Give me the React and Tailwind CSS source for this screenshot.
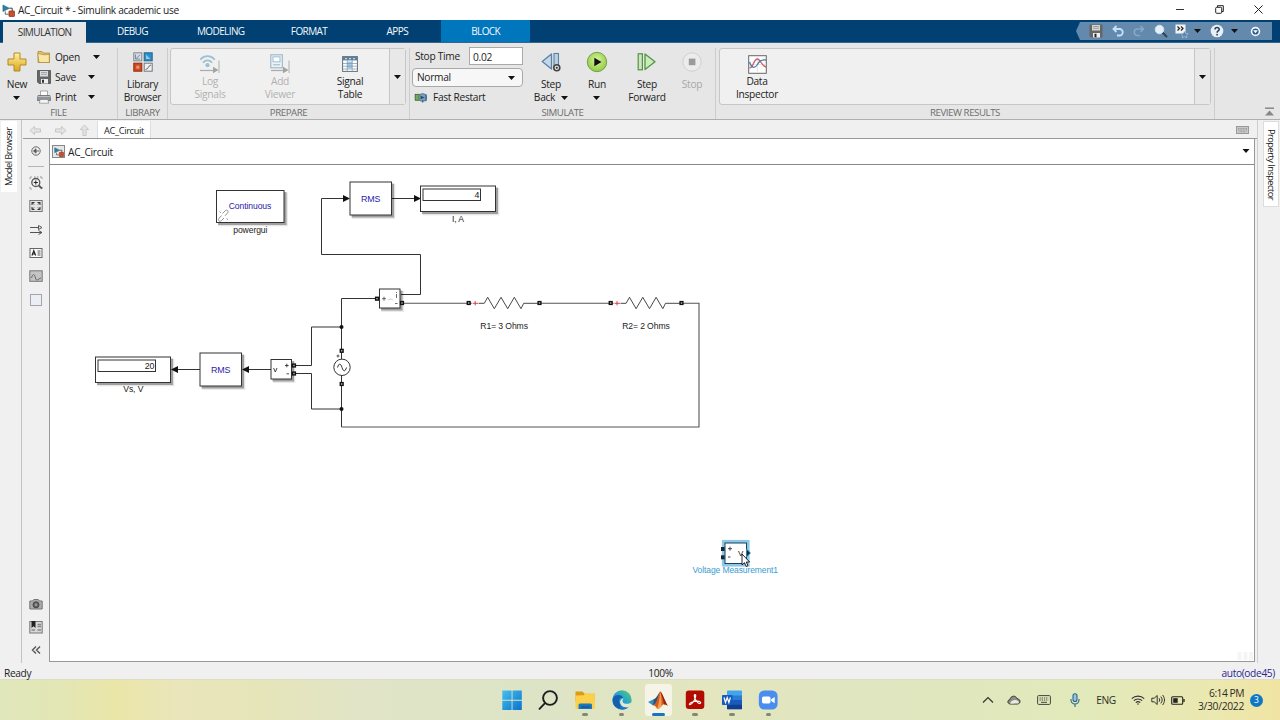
import React from 'react'
import clsx from 'clsx'

const TABS = ['SIMULATION', 'DEBUG', 'MODELING', 'FORMAT', 'APPS', 'BLOCK']

const Caret = ({ className }) => (
  <svg viewBox="0 0 7 4" className={clsx('h-[4px] w-[7px] shrink-0', className)}>
    <path d="M0 0h7L3.5 4z" fill="#111" />
  </svg>
)

/* ---------- Icons ---------- */

const ModelIcon = ({ className }) => (
  <svg viewBox="0 0 14 14" className={className}>
    <path d="M1 1l7 3.6L1 8z" fill="#2f7f9f" stroke="#1f5f7c" strokeWidth=".6" />
    <path d="M8 4.5h3V8" fill="none" stroke="#333" strokeWidth="1" />
    <path d="M3.5 8v3H7" fill="none" stroke="#333" strokeWidth=".8" />
    <rect x="7.5" y="7.5" width="6" height="6" rx=".8" fill="#c8512d" stroke="#8d2f15" strokeWidth=".8" />
  </svg>
)

const PlusIcon = () => (
  <svg viewBox="0 0 20 20" className="h-5 w-5">
    <defs>
      <linearGradient id="gold" x1="0" y1="0" x2="0" y2="1">
        <stop offset="0" stopColor="#fff3a0" />
        <stop offset="1" stopColor="#dca41c" />
      </linearGradient>
    </defs>
    <path d="M7 1h6v6h6v6h-6v6H7v-6H1V7h6z" fill="url(#gold)" stroke="#b58a25" strokeWidth="1" strokeLinejoin="round" />
  </svg>
)

const FolderIcon = () => (
  <svg viewBox="0 0 14 14" className="h-[14px] w-[14px]">
    <path d="M1 1.500h4L6 3h6.500v9.500H1z" fill="#e3c56a" stroke="#a98a38" strokeWidth=".8" />
    <path d="M.7 3.500l6.800 1.300 4.800-.5v8.200H2z" fill="#f8e6a6" stroke="#a98a38" strokeWidth=".7" />
  </svg>
)

const SaveIcon = () => (
  <svg viewBox="0 0 14 14" className="h-[14px] w-[14px]">
    <path d="M.5.5h13v13H2L.5 12z" fill="#666" stroke="#444" strokeWidth=".7" />
    <path d="M3 1h8v5.5H3z" fill="#d9dde0" />
    <path d="M4 2.5h6M4 4.3h6" stroke="#8a9095" strokeWidth=".7" />
    <path d="M4 9h7v4.5H4z" fill="#eee" />
    <path d="M5 9.8h2v3H5z" fill="#333" />
  </svg>
)

const PrintIcon = () => (
  <svg viewBox="0 0 14 14" className="h-[14px] w-[14px]">
    <path d="M3.5 1h7v5h-7z" fill="#fdfdfd" stroke="#888" strokeWidth=".7" />
    <path d="M1 5.5h12l.7 5H.3z" fill="#8f969b" stroke="#5f666b" strokeWidth=".7" />
    <path d="M1 6.5h12" stroke="#c5cacd" strokeWidth=".8" />
    <path d="M3 9.5h8l.6 3.7H2.4z" fill="#f5f5f5" stroke="#777" strokeWidth=".6" />
  </svg>
)

const LibraryIcon = () => (
  <svg viewBox="0 0 20 20" className="h-5 w-5">
    <rect x=".8" y=".8" width="8" height="8" fill="#d7dce0" stroke="#808890" />
    <path d="M2.500 2.500v4.500h4.500M3 6.500L7 3" fill="none" stroke="#6b8497" strokeWidth=".9" />
    <rect x="11.2" y=".8" width="8" height="8" fill="#2f8cc4" stroke="#1f6790" />
    <path d="M13 7h4.500L13 2.500z" fill="#8fc9e8" />
    <rect x=".8" y="11.2" width="8" height="8" fill="#cf4a20" stroke="#8f2c0d" />
    <rect x="3.3" y="13.7" width="3" height="3" fill="#e79476" />
    <rect x="11.2" y="11.2" width="8" height="8" fill="#f0f0f0" stroke="#707880" />
    <path d="M12.5 17.5c3 0 3-4.500 5.500-4.500" fill="none" stroke="#555" strokeWidth=".9" />
  </svg>
)

const LogSignalsIcon = () => (
  <svg viewBox="0 0 20 20" className="h-5 w-5">
    <g fill="none" stroke="#9fc0d4" strokeWidth="1.800" strokeLinecap="round">
      <path d="M.8 5.200a9 9 0 0 1 13.400 0" />
      <path d="M3.400 8.200a5.600 5.600 0 0 1 8.200 0" />
    </g>
    <circle cx="7.500" cy="11.200" r="2.100" fill="#9fc0d4" />
    <path d="M0 16.500h15" stroke="#aaa" strokeWidth="1.200" />
    <path d="M13 12.800l5.500 3.200-5.500 3.200z" fill="#a3a3a3" />
    <path d="M19 6.500v12.500" stroke="#b0b0b0" />
  </svg>
)

const AddViewerIcon = () => (
  <svg viewBox="0 0 20 20" className="h-5 w-5">
    <rect x=".8" y=".8" width="11.500" height="13" fill="#eef2f5" stroke="#9db5c6" strokeWidth="1.100" />
    <rect x="3" y="2.800" width="7" height="5" fill="#fff" stroke="#9fc3dc" strokeWidth="1.100" />
    <path d="M3 10.800h7" stroke="#9db5c6" />
    <path d="M1 16.500h13" stroke="#aaa" strokeWidth="1.200" />
    <path d="M13 12.800l5.500 3.200-5.500 3.200z" fill="#a3a3a3" />
    <path d="M19 6.500v12.500" stroke="#b0b0b0" />
  </svg>
)

const SignalTableIcon = () => (
  <svg viewBox="0 0 16 16" className="h-4 w-4">
    <rect x=".6" y=".6" width="14.800" height="14.800" fill="#fff" stroke="#5f6f7c" />
    <path d="M1 1h14v3.400H1z" fill="#5f7f98" />
    <path d="M5.200 5.500h5v7h-5z" fill="#9cc9ea" />
    <path d="M1 7.500h14M1 10.200h14M1 13h14M5.200 4v11.500M10.200 4v11.500" stroke="#7d93a5" strokeWidth=".7" />
    <path d="M3 2.700h2M7 2.700h2M11 2.700h2" stroke="#dce8f0" />
  </svg>
)

const FastRestartIcon = () => (
  <svg viewBox="0 0 14 12" className="h-[11px] w-[14px]">
    <rect x=".6" y="2.500" width="4.500" height="6.500" fill="#6fae4a" stroke="#34552a" strokeWidth=".8" />
    <circle cx="8.800" cy="6" r="4.300" fill="#7e9fb9" stroke="#4b6b85" strokeWidth=".8" />
    <path d="M6.500 4l4.500 2-4.500 2z" fill="#1f4f78" />
    <path d="M12.500 2.500v7.500M8.800 9v2.500" stroke="#34618a" strokeWidth="1.200" />
  </svg>
)

const StepBackIcon = () => (
  <svg viewBox="0 0 20 20" className="h-5 w-5">
    <path d="M10.500 2v15L1.200 9.500z" fill="#c2d8e9" stroke="#5b81a5" strokeWidth="1.300" strokeLinejoin="round" />
    <rect x="13" y="1.500" width="4.500" height="14" fill="#b9d0e3" stroke="#5b81a5" strokeWidth="1.100" />
    <circle cx="15.800" cy="15.800" r="3" fill="#ddd" stroke="#444" strokeWidth="1.600" />
    <circle cx="15.800" cy="15.800" r="1" fill="#333" />
  </svg>
)

const RunIcon = () => (
  <svg viewBox="0 0 22 22" className="h-[22px] w-[22px]">
    <defs>
      <radialGradient id="run" cx=".5" cy=".4" r=".6">
        <stop offset="0" stopColor="#d9f59b" />
        <stop offset="1" stopColor="#8fca42" />
      </radialGradient>
    </defs>
    <circle cx="11" cy="11" r="9.700" fill="url(#run)" stroke="#6d9a44" strokeWidth=".9" />
    <path d="M8.300 6.700l7.200 4.300-7.200 4.300z" fill="#111" />
  </svg>
)

const StepForwardIcon = () => (
  <svg viewBox="0 0 20 20" className="h-5 w-5">
    <rect x="1.200" y="1.800" width="4.200" height="16" fill="#cbe6bb" stroke="#55934a" strokeWidth="1.200" />
    <path d="M8 2v15.500l10-7.800z" fill="#c9edb6" stroke="#55934a" strokeWidth="1.300" strokeLinejoin="round" />
  </svg>
)

const StopIcon = () => (
  <svg viewBox="0 0 20 20" className="h-5 w-5">
    <circle cx="10" cy="10" r="9.200" fill="#ececec" stroke="#cfcfcf" />
    <rect x="6.800" y="6.600" width="6.600" height="6.600" fill="#9b9b9b" />
  </svg>
)

const InspectorIcon = () => (
  <svg viewBox="0 0 19 19" className="h-[19px] w-[19px]">
    <rect x=".7" y=".7" width="17.600" height="17.600" fill="#fdfdfd" stroke="#666" />
    <path d="M1 9.500h17M9.500 1v17" stroke="#ddd" strokeWidth=".7" />
    <path d="M1.500 13c4 0 4-9 8-9 3 0 4 7 8.500 8" fill="none" stroke="#d05c66" strokeWidth="1.300" />
    <path d="M1.500 7c2 6 5 7 8 2.500 2-4 5-5 8.500-4.500" fill="none" stroke="#4a7ba6" strokeWidth="1.300" />
  </svg>
)

/* ---------- Ribbon ---------- */

const Section = ({ title, className, children }) => (
  <div className={clsx('flex shrink-0 flex-col pt-[1px] text-[#222]', className)}>
    <div className="flex h-[65px]">{children}</div>
    <div className="text-center text-[9.700px] leading-[12px] tracking-[-0.45px] text-[#6d6d6d]">{title}</div>
  </div>
)

const Divider = () => <div className="mt-[5px] h-[71px] w-px shrink-0 bg-[#cdcdcd]" />

const BigButton = ({ icon, lines, disabled, className }) => (
  <div className={clsx('flex shrink-0 flex-col items-center pt-[7px]', className)}>
    <div className="flex h-[22px] items-center">{icon}</div>
    <div className={clsx('mt-[5px] flex flex-col items-center leading-[13px] whitespace-nowrap', disabled && 'text-[#a8a8a8]')}>
      {lines.map((l, i) => <span key={i} className="flex h-[13px] items-center">{l}</span>)}
    </div>
  </div>
)

const GalleryItem = ({ icon, lines, disabled }) => (
  <div className="flex w-[70px] flex-col items-center pt-[4px]">
    <div className="flex h-[22px] items-center">{icon}</div>
    <div className={clsx('flex flex-col items-center leading-[13px] whitespace-nowrap', disabled && 'text-[#b0b0b0]')}>
      {lines.map(l => <span key={l}>{l}</span>)}
    </div>
  </div>
)

const Gallery = ({ className, children }) => (
  <div className={clsx('mt-[4px] flex h-[57px] rounded-[3px] border border-[#c6c6c6] bg-[#f0f0f0]', className)}>
    {children}
    <div className="ml-auto flex w-[16px] items-center justify-center border-l border-[#c6c6c6] bg-[#e8e8e8]">
      <Caret className="h-[4px] w-[6px]" />
    </div>
  </div>
)

const FileRow = ({ icon, label, gap }) => (
  <div className="flex h-5 items-center">
    {icon}
    <span className="mt-px ml-[4px]">{label}</span>
    <Caret className={gap} />
  </div>
)

const Ribbon = () => (
  <div className="flex h-[77px] border-b border-[#aeaeae] bg-[#e6e6e6] text-[10.200px] tracking-[-0.3px]">
    <Section title="FILE" className="w-[117px]">
      <BigButton className="w-[34px]" icon={<PlusIcon />} lines={['New', <Caret />]} />
      <div className="flex flex-col pt-[3px] pl-[3px]">
        <FileRow icon={<FolderIcon />} label="Open" gap="ml-[13px]" />
        <FileRow icon={<SaveIcon />} label="Save" gap="ml-[12px]" />
        <FileRow icon={<PrintIcon />} label="Print" gap="ml-[12px]" />
      </div>
    </Section>
    <Divider />
    <Section title="LIBRARY" className="w-[49px]">
      <BigButton className="w-full" icon={<LibraryIcon />} lines={['Library', 'Browser']} />
    </Section>
    <Divider />
    <Section title="PREPARE" className="w-[241px]">
      <Gallery className="ml-[2px] w-[236px] pl-[4px]">
        <GalleryItem icon={<LogSignalsIcon />} lines={['Log', 'Signals']} disabled />
        <GalleryItem icon={<AddViewerIcon />} lines={['Add', 'Viewer']} disabled />
        <GalleryItem icon={<SignalTableIcon />} lines={['Signal', 'Table']} />
      </Gallery>
    </Section>
    <Divider />
    <Section title="SIMULATE" className="w-[305px]">
      <div className="flex w-[113px] flex-col pt-[3px] pl-[2px]">
        <div className="flex h-[18px] items-center">
          <span className="mt-px w-[57px] pl-[3px] whitespace-nowrap">Stop Time</span>
          <div className="h-[18px] w-[54px] border border-[#a9a9a9] bg-white pl-[3px] leading-[18px]">0.02</div>
        </div>
        <div className="mt-[2.500px] flex h-[19px] w-[111px] items-center rounded-[4px] border border-[#a9a9a9] bg-[#f7f7f7] pt-px pr-[7px] pl-[4px]">
          Normal
          <Caret className="ml-auto" />
        </div>
        <div className="mt-[2px] flex h-[18px] items-center gap-[5px] pl-[2px] whitespace-nowrap">
          <FastRestartIcon />
          Fast Restart
        </div>
      </div>
      <BigButton
        className="w-[56px]"
        icon={<StepBackIcon />}
        lines={['Step', <span className="flex items-center gap-[6px]">Back <Caret className="h-[4px] w-[6px]" /></span>]}
      />
      <BigButton className="w-[36px]" icon={<RunIcon />} lines={['Run', <Caret className="h-[4px] w-[6px]" />]} />
      <BigButton className="w-[64px]" icon={<StepForwardIcon />} lines={['Step', 'Forward']} />
      <BigButton className="w-[26px]" icon={<StopIcon />} lines={['Stop']} disabled />
    </Section>
    <Divider />
    <Section title="REVIEW RESULTS" className="w-[498px]">
      <Gallery className="ml-[3px] w-[492px] pl-[2px]">
        <GalleryItem icon={<InspectorIcon />} lines={['Data', 'Inspector']} />
      </Gallery>
    </Section>
    <Divider />
    <div className="flex flex-1 items-end justify-end pr-[6px] pb-[3px]">
      <svg viewBox="0 0 9 9" className="h-[9px] w-[9px]">
        <path d="M0 1.200h9" stroke="#888" strokeWidth="1.500" />
        <path d="M4.500 3.500L9 8.500H0z" fill="#888" />
      </svg>
    </div>
  </div>
)

const QuickAccess = () => (
  <div className="mr-[8px] ml-auto flex h-[18px] w-[196px] items-center bg-[#6389ac] pl-[13px] [clip-path:polygon(4px_0,100%_0,100%_100%,4px_100%,0_50%)]">
    <svg viewBox="0 0 14 14" className="h-[14px] w-[14px]">
      <path d="M.5.5h13v13H2L.5 12z" fill="#666" />
      <path d="M3 1h8v5.500H3z" fill="#d5d5d0" />
      <path d="M4 2.500h6M4 4.300h6" stroke="#888" strokeWidth=".7" />
      <path d="M4 9h7v4.500H4z" fill="#eee" />
      <path d="M5.500 9.800h2v3.500h-2z" fill="#222" />
    </svg>
    <svg viewBox="0 0 12 12" className="ml-[9px] h-[12px] w-[12px]" fill="none" stroke="#c3e2f8" strokeWidth="1.800">
      <path d="M4.500 1L1.500 4l3 3M2 4h5.500a3.200 3.200 0 0 1 0 6.500H5" />
    </svg>
    <svg viewBox="0 0 12 12" className="ml-[9px] h-[12px] w-[12px]" fill="none" stroke="#86a9c6" strokeWidth="1.600">
      <path d="M7.500 1l3 3-3 3M10 4H4.500a3.200 3.200 0 0 0 0 6.500H7" />
    </svg>
    <svg viewBox="0 0 14 14" className="ml-[9px] h-[14px] w-[14px]">
      <path d="M8.500 8.500l4 4" stroke="#34424f" strokeWidth="2" strokeLinecap="round" />
      <circle cx="5.500" cy="5.500" r="4.300" fill="#e4f0f8" stroke="#cadcea" />
    </svg>
    <svg viewBox="0 0 14 14" className="ml-[7px] h-[14px] w-[14px]">
      <rect x=".5" y=".5" width="10" height="9" fill="#f3f3f3" />
      <path d="M2.500 2.500l2 2-2 2M6 2.500l2 2-2 2" fill="none" stroke="#222" strokeWidth="1.200" />
      <path d="M9.500 7l1.200 2.300 2.600.3-1.900 1.800.5 2.500-2.400-1.300L7.200 14l.5-2.500-1.900-1.900 2.600-.3z" fill="#5c87ab" stroke="#b7cfe0" strokeWidth=".6" />
    </svg>
    <Caret className="ml-[5px] w-[6px]" />
    <svg viewBox="0 0 14 14" className="ml-[9px] h-[14px] w-[14px]">
      <circle cx="7" cy="7" r="6.300" fill="#e9eff4" />
      <path d="M5 5.400c0-2.600 4.200-2.500 4.200-.1C9.200 7 7.100 6.900 7.100 8.700" fill="none" stroke="#25405c" strokeWidth="1.500" />
      <circle cx="7.100" cy="10.700" r=".9" fill="#25405c" />
    </svg>
    <Caret className="ml-[7px] w-[6px]" />
    <svg viewBox="0 0 12 12" className="ml-[12px] h-[11px] w-[11px]">
      <circle cx="6" cy="6" r="4.300" fill="#2b5f8b" stroke="#f1f6fa" strokeWidth="1.800" />
      <path d="M3.500 4.500h5L6 7.800z" fill="#fff" />
    </svg>
  </div>
)

/* ---------- Side palette ---------- */

const PaletteCell = ({ children }) => (
  <div className="flex h-[23.300px] items-center justify-center">
    <svg viewBox="0 0 14 14" className="h-[14px] w-[14px]" fill="none" stroke="#555" strokeWidth="1">{children}</svg>
  </div>
)

const Palette = () => (
  <div className="flex w-[27px] flex-col pb-[1px]">
    <div className="flex h-[24px] items-center justify-center">
      <svg viewBox="0 0 10 10" className="h-[10px] w-[10px]" fill="none" stroke="#666">
        <circle cx="5" cy="5" r="4.200" />
        <path d="M8 5H3.500M5 2.800L2.500 5 5 7.200z" fill="#333" />
      </svg>
    </div>
    <div className="mx-auto mt-[3px] mb-[4.500px] h-px w-4 bg-[#b5b5b5]" />
    <PaletteCell>
      <path d="M1 3V1h2M11 1h2v2M13 11v2M1 11v2h2M5 1h1.500M8 1h1.500" strokeDasharray="1.500 .8" stroke="#888" />
      <circle cx="6.800" cy="6.500" r="4" strokeWidth="1.300" />
      <path d="M9.800 9.500l3.200 3.200" strokeWidth="1.800" />
      <path d="M4.800 6.500h4M6.800 4.500v4" stroke="#222" />
    </PaletteCell>
    <PaletteCell>
      <rect x=".8" y="1.500" width="12.400" height="11" fill="#e4e4e4" stroke="#777" />
      <path d="M3 6V3.500h2.500M8.500 3.500H11V6M11 8v2.500H8.500M5.500 10.500H3V8M3 3.500l2 2M11 3.500l-2 2M11 10.500l-2-2M3 10.500l2-2" stroke="#333" />
    </PaletteCell>
    <PaletteCell>
      <path d="M1 4.500h9M1 9.500h12" strokeWidth="1.200" />
      <path d="M9.500 2.500l3.500 2-3.500 2zM9.500 7.500l3.500 2-3.500 2" />
    </PaletteCell>
    <PaletteCell>
      <rect x="1" y="2.500" width="12" height="9" fill="#fafafa" stroke="#666" />
      <path d="M3 9.500L4.800 4.800 6.600 9.500M3.600 8h2.400" stroke="#222" strokeWidth="1.200" />
      <path d="M8.500 5h3M8.500 7h3M8.500 9h3" />
    </PaletteCell>
    <PaletteCell>
      <rect x=".8" y="1.800" width="12.400" height="10.500" fill="#c4c4c4" stroke="#777" />
      <path d="M2.500 9c1.500-5 3-4 4 0s2.500 1 5.500 0" stroke="#666" />
    </PaletteCell>
    <PaletteCell>
      <rect x="1.500" y="1.500" width="11" height="11" fill="#eceef6" stroke="#a2a4ae" />
    </PaletteCell>
    <div className="mt-auto">
      <PaletteCell>
        <path d="M.8 4h3l1-1.500h4.500L10.500 4h2.700v8H.8z" fill="#aaa" stroke="#777" />
        <circle cx="7" cy="7.800" r="3" fill="#666" stroke="#444" />
        <circle cx="7" cy="7.800" r="1.200" fill="#999" stroke="none" />
      </PaletteCell>
      <PaletteCell>
        <rect x=".8" y="1.500" width="12.400" height="11.500" fill="#d8d8d8" stroke="#777" />
        <path d="M2.500 1h4v7l-2-1.800-2 1.800z" fill="#222" stroke="none" />
        <path d="M8.500 4.500h3.500M8.500 6.500h3.500M2.500 10h3.500M8.500 10h3.500" stroke="#888" strokeWidth="1.500" />
      </PaletteCell>
      <PaletteCell>
        <path d="M7 3.500L3.500 7 7 10.500M11 3.500L7.500 7l3.500 3.500" strokeWidth="1.400" />
      </PaletteCell>
    </div>
  </div>
)

/* ---------- Diagram ---------- */

const INK = '#333'
const BLUE = '#2a22a8'

const Block = ({ x, y, w, h }) => (
  <>
    <rect x={x + 1.5} y={y + 1.5} width={w + 1} height={h + 1} fill="#000" opacity=".3" />
    <rect x={x + 2} y={y + 2} width={w + 1.8} height={h + 1.8} fill="#000" opacity=".1" />
    <rect x={x} y={y} width={w} height={h} fill="#fff" stroke={INK} />
  </>
)

const Port = ({ x, y }) => <rect x={x - 1.4} y={y - 1.4} width="2.800" height="2.800" fill="#bbb" stroke="#111" strokeWidth="1.400" />

const Label = ({ x, y, color = '#222', size = 8.6, children }) => (
  <text x={x} y={y} fill={color} fontSize={size} letterSpacing="-.1" textAnchor="middle">{children}</text>
)

const Display = ({ x, y, value }) => (
  <>
    <Block x={x} y={y} w={75} h={25.5} />
    <rect x={x + 2.5} y={y + 3} width="57.500" height="11.500" fill="#fff" stroke={INK} />
    <text x={x + 59} y={y + 12} fontSize="8.800" fill="#222" textAnchor="end">{value}</text>
  </>
)

const Resistor = ({ x, label }) => (
  <g fill="none" stroke={INK}>
    <path d={`M${x} 303.300h16.100l3.400-6 6.600 11.400 6.700-11.400 6.700 11.400 6.600-11.400 6.700 11.400 2.700-5.400H${x + 71}`} strokeWidth=".9" />
    <path d={`M${x + 3.5} 303h7`} stroke="#fff" strokeWidth="2" />
    <path d={`M${x + 4.5} 303.300h5.500M${x + 7} 301v4.400`} stroke="#d8322f" strokeWidth=".9" />
    <g stroke="none"><Label x={x + 35.9} y={328.6}>{label}</Label></g>
  </g>
)

const Diagram = () => (
  <svg viewBox="50 165 1204 496" className="block h-[496px] w-[1204px] font-['Liberation_Sans',Arial,sans-serif]">
    {/* wires */}
    <g fill="none" stroke={INK} strokeWidth="1">
      <path d="M344 198.500h-22.500v56h99v40H401" />
      <path d="M392 198.500h24M271 369.500h-24M200 369.500h-24" />
      <path d="M377 298.500h-35.500V350M341.500 384v43" />
      <path d="M294 365.500h17.500V327h30M294 373.500h17.500V409h30" />
      <path d="M341.500 350v34" />
      <path d="M341.500 427H699V303.300h-18M402 303.300h67M540 303.300h71" stroke="#555" strokeWidth="1.100" />
    </g>
    <g fill="#111">
      <path d="M343 195v7l7-3.500zM414 195v7l7-3.500zM249 366v7l-7-3.500zM178 366v7l-7-3.500z" />
      <circle cx="341.500" cy="327" r="2" />
      <circle cx="341.500" cy="409" r="2" />
    </g>

    {/* powergui */}
    <Block x={216.5} y={190.5} w={67.5} h={32} />
    <Label x={250} y={209.4} color={BLUE}>Continuous</Label>
    <Label x={250.3} y={232.8}>powergui</Label>
    <g fill="none" stroke="#888" strokeWidth=".9">
      <path d="M221.500 215.500l-2.600 3c-1.400 2 .8 3.700 2.500 2.200l2.600-2.700M222.500 213.500l2.800-2.800c1.800-1.500 3.700.5 2.300 2.200l-2.500 2.900" />
      <path d="M219.500 211.500l1.200 1.300M226.500 218.500l1.500 1.300" />
    </g>

    <Block x={350} y={182} w={41.5} h={33} />
    <Label x={370.7} y={201.5} color={BLUE} size={8.9}>RMS</Label>
    <Display x={420.5} y={186} value="4" />
    <Label x={458} y={221.5}>I, A</Label>

    <Block x={200} y={353} w={41.5} h={33} />
    <Label x={220.7} y={372.5} color={BLUE} size={8.9}>RMS</Label>
    <Display x={95.5} y={357} value="20" />
    <Label x={133.3} y={392}>Vs, V</Label>

    {/* current measurement */}
    <Block x={379.5} y={289} w={20.5} h={19} />
    <path d="M382 298.700h4M384 296.700v4M395 303.500h2.500M396.500 292v1M396.500 294v4" fill="none" stroke="#444" strokeWidth=".8" />
    <path d="M388 300l3-1 2 1" fill="none" stroke="#bbb" strokeWidth=".7" />
    <Port x={377} y={298.7} />
    <Port x={402} y={303} />

    {/* voltage measurement */}
    <Block x={271} y={359.5} w={20.5} h={19.5} />
    <path d="M285 365.500h3.600M286.800 363.700v3.600M286.500 373.800h2.500M273.600 368l1.700 4 1.700-4" fill="none" stroke="#333" strokeWidth=".9" />
    <Port x={294} y={365.5} />
    <Port x={294} y={373.5} />

    {/* AC source */}
    <circle cx="342" cy="367.300" r="8.200" fill="#fff" stroke={INK} strokeWidth="1" />
    <path d="M337.500 367.500c1.500-4.500 3-4.500 4.500 0s3 4.500 4.500 0" fill="none" stroke={INK} strokeWidth="1" />
    <path d="M336.500 356h3M338 354.500v3" stroke={INK} strokeWidth=".8" />
    <Port x={341.7} y={350.8} />
    <Port x={341.7} y={384} />

    <Resistor x={468.2} label="R1= 3 Ohms" />
    <Resistor x={610} label="R2= 2 Ohms" />
    <Port x={468.7} y={303} />
    <Port x={539.5} y={303} />
    <Port x={610.7} y={303} />
    <Port x={681.5} y={303} />

    {/* selected block */}
    <rect x="723.500" y="541.500" width="24.500" height="23.500" fill="#fff" stroke="#8cc8ea" strokeWidth="3.200" />
    <rect x="725" y="543" width="21.500" height="20.500" fill="#fff" stroke="#1d4257" strokeWidth="1" />
    <path d="M746.500 549l4 4-4 4z" fill="#14283a" stroke="#3d9ccc" strokeWidth=".7" />
    <rect x="721" y="547" width="3.600" height="4" fill="#14283a" />
    <rect x="721" y="555.300" width="3.600" height="4" fill="#14283a" />
    <path d="M728 548.700h4M730 546.700v4M728 557h2.500" stroke="#333" strokeWidth=".9" />
    <Label x={740.5} y={555.5} size={8}>V</Label>
    <Label x={735.2} y={572.6} color="#3a9cd0" size={8.5}>Voltage Measurement1</Label>
    <path d="M742 554v11l2.500-2.300 1.700 3.800 1.800-.8-1.700-3.700h3.300z" fill="#fff" stroke="#111" strokeWidth=".9" />

    <path d="M1237.500 652h4v8h-4zM1243.500 652h4v8h-4zM1249 652h4v8h-4z" fill="#f5f5f5" />
  </svg>
)

const NavArrow = ({ rotate }) => (
  <svg viewBox="0 0 14 12" className={clsx('h-[11px] w-[13px]', rotate)}>
    <path d="M1 6l5-4.500v2.800h6.500v3.400H6v2.800z" fill="#e4e4e4" stroke="#c4c4c4" />
  </svg>
)

const Workspace = () => (
  <div className="flex h-[543px] bg-[#f0f0f0]">
    <div className="w-[22px] shrink-0 border-r border-[#c4c4c4] pt-[1px] pl-[1px]">
      <div className="flex h-[71px] w-[16px] rotate-180 items-center justify-center bg-white text-[9.300px] leading-[16px] tracking-[-0.55px] whitespace-nowrap text-[#222] [writing-mode:vertical-rl]">
        Model Browser
      </div>
    </div>

    <div className="flex w-[1235px] shrink-0 flex-col">
      <div className="ml-[1px] flex h-[19px] items-center border-b border-[#999]">
        <div className="flex h-full items-center gap-[11.500px] pt-[2px] pl-[6px]">
          <NavArrow />
          <NavArrow rotate="rotate-180" />
          <NavArrow rotate="rotate-90" />
        </div>
        <div className="mt-[1px] ml-[6px] flex h-[17px] w-[54px] items-center justify-center border-x border-[#ddd] bg-white pt-[3px] text-[9.200px] tracking-[-0.3px] text-[#222]">AC_Circuit</div>
        <svg viewBox="0 0 13 8" className="mt-[2px] mr-[8px] ml-auto h-[8px] w-[13px]">
          <rect x=".5" y=".5" width="12" height="7" fill="#c9c9c9" stroke="#999" />
          <path d="M2 2.500h9M2 4h9M3.500 5.700h6" stroke="#8d8d8d" strokeWidth=".8" strokeDasharray="1 .6" />
        </svg>
      </div>
      <div className="flex flex-1">
        <Palette />
        <div className="h-[523px] w-[1206px] border-r border-b border-l border-[#999] bg-white">
          <div className="flex h-[26px] items-center border-b border-[#888] pl-[2px]">
            <div className="flex h-[13px] w-[13px] items-center justify-center border border-[#888] bg-[#e6e6e6]">
              <ModelIcon className="h-[10px] w-[10px]" />
            </div>
            <span className="mt-[2px] ml-[3px] text-[10.200px] tracking-[-0.3px] text-[#222]">AC_Circuit</span>
            <Caret className="mr-[4px] mb-[2px] ml-auto h-[4.500px] w-[8px]" />
          </div>
          <Diagram />
        </div>
      </div>
    </div>

    <div className="flex-1 border-l border-[#cfcfcf] pt-[1px] pl-[5px]">
      <div className="flex h-[86px] w-[16px] items-center justify-center border border-[#ddd] bg-white text-[9.300px] leading-[14px] tracking-[-0.55px] whitespace-nowrap text-[#222] [writing-mode:vertical-rl]">
        Property Inspector
      </div>
    </div>
  </div>
)

/* ---------- Taskbar ---------- */

const TASKS = [
  {
    id: 'start',
    icon: (
      <>
        <defs>
          <linearGradient id="win" x1="0" y1="0" x2="1" y2="1">
            <stop offset="0" stopColor="#45c0ee" />
            <stop offset="1" stopColor="#0a72cc" />
          </linearGradient>
        </defs>
        <path d="M.3.5h9.300v9.300H.3zM10.500.5h9.300v9.300h-9.300zM.3 10.700h9.300V20H.3zM10.500 10.700h9.300V20h-9.300z" fill="url(#win)" />
      </>
    ),
  },
  {
    id: 'search',
    icon: (
      <g fill="none" stroke="#1e1e1e" strokeWidth="1.900">
        <circle cx="12" cy="8" r="6.900" />
        <path d="M7 13.200L1.500 18.800" strokeLinecap="round" />
      </g>
    ),
  },
  {
    id: 'files',
    open: true,
    icon: (
      <>
        <path d="M.5 1.500h7l2 2.300h10v8H.5z" fill="#dd9a14" />
        <path d="M.5 5.500l8-.2 1.800-1.500h9.400V18a1 1 0 0 1-1 1H1.500a1 1 0 0 1-1-1z" fill="#fbd04b" />
        <path d="M3.500 19v-4a1.500 1.500 0 0 1 1.500-1.500h10.500A1.500 1.500 0 0 1 17 15v4z" fill="#1877bd" />
        <path d="M6 17h8.500" stroke="#0f5487" strokeWidth="1.200" />
      </>
    ),
  },
  {
    id: 'edge',
    open: true,
    icon: (
      <>
        <defs>
          <linearGradient id="edge" x1="0" y1="1" x2="1" y2="0">
            <stop offset="0" stopColor="#1268b8" />
            <stop offset=".5" stopColor="#259fd6" />
            <stop offset="1" stopColor="#55cf6c" />
          </linearGradient>
        </defs>
        <circle cx="10" cy="10" r="9.700" fill="url(#edge)" />
        <path d="M1 8c2.500-4 9-4 10.500.5-3-1.500-5 .8-4.200 4 .8 3.500 4.500 5.800 9 4.300C9 23-1 17 1 8z" fill="#1560ad" />
        <path d="M11.800 8.500c-2 1.500-1.600 4.300 1 5 2.200.6 4.800.1 6.800-1.300-.6 2.400-1.600 3.900-3.100 5.300-4.500 1-8.500-1.500-8.500-5 0-2.300 1.700-4.200 3.800-4z" fill="#e4e8cf" />
        <path d="M8 12.500c.3 3.500 4.300 6.200 8.800 4.500-2.500 2.500-6 3-8.800 1.500z" fill="#1a77c4" />
      </>
    ),
  },
  {
    id: 'matlab',
    active: true,
    icon: (
      <>
        <path d="M0 12l6-3 3 2.500-4 4z" fill="#3b8fc0" />
        <path d="M6 9c2.500-.5 4-5 6-7l-3.500 11.500L5 15.500z" fill="#27547a" />
        <path d="M12 1.500c2 0 4.500 9 7.800 14.300-3-2.300-4.500-1.800-6.300.2-1.500 1.800-3 3.200-4.500 3-.5-2.500-2-3.200-3.500-3.500C9 13 10.500 4 12 1.500z" fill="#d9581f" />
        <path d="M12 1.500c1 2 1.700 7 1.500 14.500-1.500 1.800-3 3.200-4.500 3C10.500 15 12 9 12 1.500z" fill="#f2a04a" />
        <path d="M12 1.500c2 0 4.500 9 7.800 14.300-1.500-1-2.800-1.600-3.800-1.300C15 9 13.500 4 12 1.500z" fill="#8f2416" />
      </>
    ),
  },
  {
    id: 'acrobat',
    open: true,
    icon: (
      <>
        <rect x=".8" y=".5" width="18.500" height="18.500" rx="3" fill="#b30b00" />
        <path d="M4.500 14.500c-.5-1.500 4-3.300 7.500-3.300s4.500 1.800 3 2.300c-2 .5-5.500-4-5.700-7.500-.1-2 1.500-2 1.400 0-.2 3-4 9.500-6.200 8.500z" fill="none" stroke="#fff" strokeWidth="1.200" />
      </>
    ),
  },
  {
    id: 'word',
    open: true,
    icon: (
      <>
        <rect x="5" y=".8" width="15" height="18.400" rx="1" fill="#2b7cd3" />
        <path d="M5 .8h15v4.700H5z" fill="#41a5ee" />
        <path d="M5 10h15v4.700H5z" fill="#185abd" />
        <path d="M5 14.600h15v4.600H5z" fill="#103f91" />
        <rect x="0" y="5" width="10.500" height="10" rx=".8" fill="#185abd" />
        <path d="M2 7.500l1.500 5 1.700-5 1.700 5 1.500-5" fill="none" stroke="#fff" strokeWidth="1.200" />
      </>
    ),
  },
  {
    id: 'zoom',
    open: true,
    icon: (
      <>
        <rect x=".8" y=".5" width="18.800" height="19" rx="5.500" fill="#4a8df0" />
        <rect x="4" y="6.500" width="8.500" height="7" rx="1.700" fill="#fff" />
        <path d="M13.200 9.300l3.500-2.300v6.200l-3.500-2.300z" fill="#fff" />
      </>
    ),
  },
]

const TaskButton = ({ icon, open, active }) => (
  <div className="flex w-[36.700px] shrink-0 justify-center pt-[4px]">
    <div className={clsx('flex h-[32px] w-[27px] flex-col items-center rounded-[3px] pt-[6px]', active && 'bg-[#f5f4e6]')}>
      <svg viewBox="0 0 20 20" className="h-5 w-5">{icon}</svg>
      {open && <div className="mt-[3px] h-[2.500px] w-[5.500px] rounded-full bg-[#85886f]" />}
      {active && <div className="mt-[3px] h-[2.500px] w-[13px] rounded-full bg-[#1577c2]" />}
    </div>
  </div>
)

const Taskbar = () => (
  <div className="flex h-10 bg-[linear-gradient(90deg,#e0e7bb_0%,#e3e6b4_5%,#eae6a8_9%,#eae5bb_14%,#e6e5b9_20%,#e1e4c6_28%,#dde4c6_42%,#e3e6bf_55%,#dfe6c0_68%,#e2e9ba_85%,#ebe8b0_95%,#f0e4a2_100%)] pl-[493.300px] text-[#2d2d26]">
    {TASKS.map(t => <TaskButton key={t.id} {...t} />)}
    <div className="mr-[17px] ml-auto flex items-center">
      <div className="flex w-[26px] justify-center">
        <svg viewBox="0 0 12 8" className="h-[8px] w-[12px]" fill="none" stroke="#333" strokeWidth="1.200"><path d="M1 6.500l5-5 5 5" /></svg>
      </div>
      <div className="flex w-[26px] justify-center">
        <svg viewBox="0 0 14 10" className="h-[10px] w-[14px]">
          <path d="M3.500 9C.2 9 0 5 3 4.600 3.500.5 9 0 10 3.700c3.800 0 4 5.300.5 5.300z" fill="#8d8f86" stroke="#333" strokeWidth="1" />
          <path d="M3 8.500c1-3 4-3.500 5-3.500 2.500 0 3.500 1.500 4 3-1 .8-7 .8-9 .5z" fill="#e8eadb" />
        </svg>
      </div>
      <div className="flex w-[34px] justify-center">
        <svg viewBox="0 0 14 10" className="h-[10px] w-[14px]" fill="none" stroke="#444">
          <rect x=".6" y=".6" width="12.800" height="8.800" rx="1" />
          <path d="M2.500 3h9M2.500 5h9" strokeDasharray="1.300 .9" />
          <path d="M4 7.300h6" />
        </svg>
      </div>
      <div className="flex w-[27px] justify-center">
        <svg viewBox="0 0 10 14" className="h-[14px] w-[10px]" fill="none" stroke="#2c6590" strokeWidth="1.100">
          <rect x="3" y=".8" width="4" height="7.700" rx="2" fill="#9cc3dd" />
          <path d="M1 6v1a4 4 0 0 0 8 0V6M5 11v3" />
        </svg>
      </div>
      <div className="mt-px flex w-[36px] justify-center text-[10.200px] tracking-[-0.35px]">ENG</div>
      <div className="ml-[4px] flex w-[20px] justify-center">
        <svg viewBox="0 0 14 10" className="h-[10px] w-[14px]" fill="none" stroke="#333" strokeWidth="1.100">
          <path d="M.8 3.700a8.700 8.700 0 0 1 12.400 0M2.800 5.700a6 6 0 0 1 8.400 0M4.800 7.600a3.200 3.200 0 0 1 4.400 0" />
          <circle cx="7" cy="9" r=".8" fill="#333" stroke="none" />
        </svg>
      </div>
      <div className="flex w-[20px] justify-center">
        <svg viewBox="0 0 14 12" className="h-[12px] w-[14px]" fill="none" stroke="#333">
          <path d="M.8 4.200h2.400L6.200 1.500v9L3.200 7.800H.8z" />
          <path d="M8 4.200c.9 1 .9 2.600 0 3.600M9.800 2.600c1.800 2 1.800 4.800 0 6.800M11.600 1c2.500 2.900 2.500 7.100 0 10" />
        </svg>
      </div>
      <div className="flex w-[20px] justify-center">
        <svg viewBox="0 0 14 9" className="h-[9px] w-[14px]">
          <rect x=".7" y=".7" width="11" height="7.600" rx="1" fill="none" stroke="#222" strokeWidth="1.100" />
          <path d="M2.200 2.200h4.500v4.600H2.200z" fill="#222" />
          <path d="M13 3v3" stroke="#222" strokeWidth="1.300" />
        </svg>
      </div>
      <div className="flex w-[56px] flex-col items-end text-[10.300px] leading-[13.400px] tracking-[-0.3px] whitespace-nowrap">
        <span className="tracking-[-0.5px]">6:14 PM</span>
        <span>3/30/2022</span>
      </div>
      <div className="ml-[6px] flex h-[13px] w-[13px] items-center justify-center rounded-full bg-[#0f78c4] text-[8.500px] text-white">3</div>
    </div>
  </div>
)

export default function App() {
  return (
    <div className="flex h-[720px] w-[1280px] flex-col overflow-hidden bg-white font-['Open_Sans','Noto_Sans',sans-serif]">
      {/* Title bar */}
      <div className="flex h-[20px] shrink-0 items-center pl-[2px] text-[10.200px] tracking-[-0.32px] text-[#222]">
        <ModelIcon className="h-[13px] w-[13px]" />
        <span className="mt-px ml-[3px]">AC_Circuit * - Simulink academic use</span>
        <div className="mr-[17px] mb-px ml-auto flex items-center gap-[30px]">
          <svg viewBox="0 0 9 9" className="h-[9px] w-[9px]" stroke="#333"><path d="M0 4.500h8" /></svg>
          <svg viewBox="0 0 9 9" className="h-[9px] w-[9px]" fill="none" stroke="#222">
            <rect x=".7" y="2.300" width="6" height="6" rx="1" />
            <path d="M2.500 2V.7h5.800v5.800H7" />
          </svg>
          <svg viewBox="0 0 9 9" className="h-[9px] w-[9px]" stroke="#222"><path d="M.5.5l8 8M8.500.5l-8 8" /></svg>
        </div>
      </div>

      {/* Tab strip */}
      <div className="flex h-[23px] shrink-0 items-stretch border-b border-[#33658d] bg-[#004073] text-[10px] text-[#f4f8fb]">
        {TABS.map(t => (
          <div key={t} className={clsx('flex w-[88.300px] items-end', t === 'SIMULATION' && 'pr-[2px] pl-[3px]')}>
            <div
              className={clsx(
                'flex w-full items-center justify-center tracking-[-0.6px]',
                t === 'SIMULATION' ? '-mb-px h-[21px] bg-[#e6e6e6] pb-[1px] text-[#333]' : 'h-full pt-[1px]',
                t === 'BLOCK' && 'bg-[#0076bd]'
              )}
            >
              {t}
            </div>
          </div>
        ))}
        <div className="ml-auto flex items-center"><QuickAccess /></div>
      </div>

      <Ribbon />
      <Workspace />

      {/* Status bar */}
      <div className="grid h-[17px] shrink-0 grid-cols-3 items-center border-b border-[#dcdcc8] bg-[#f0f0f0] pt-[3px] pr-[5px] pl-[4px] text-[10.200px] tracking-[-0.35px] text-[#222]">
        <span>Ready</span>
        <span className="pl-[42px] text-center">100%</span>
        <span className="text-right text-[#2a1f8f]">auto(ode45)</span>
      </div>

      <Taskbar />
    </div>
  )
}
